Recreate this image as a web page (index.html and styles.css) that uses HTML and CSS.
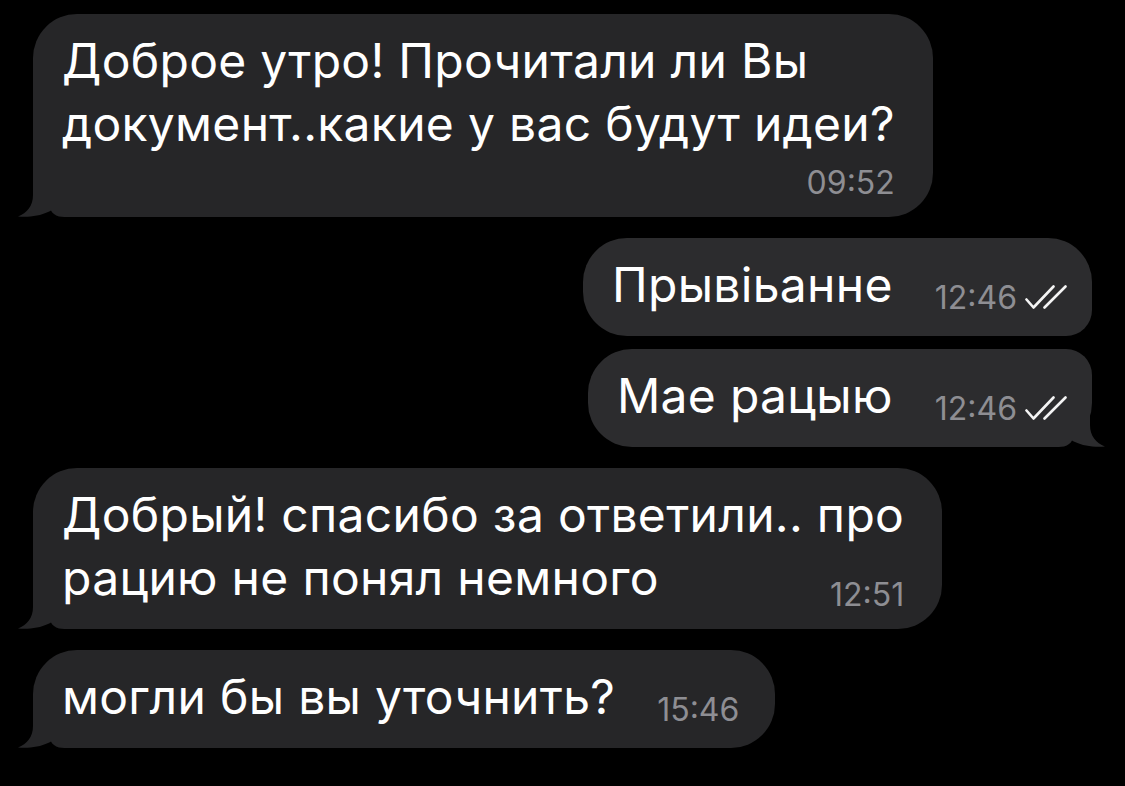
FILE: index.html
```html
<!DOCTYPE html>
<html lang="ru">
<head>
<meta charset="utf-8">
<title>Chat</title>
<link rel="stylesheet" href="styles.css">
</head>
<body>
<div class="chat">
  <div class="bubble in stack">
    <svg class="tail" viewBox="0 0 62 46"><path d="M15,0 L15,24 C15,35 9,42 0,45.5 C10,46.5 22,45 30,41 Q32,40 33,39.5 Q35,43.5 41,45.5 Q46,46 52,46 L62,46 L62,0 Z"/></svg>
    <p class="text">Доброе утро! Прочитали ли Вы<br>документ..какие у вас будут идеи?</p>
    <div class="meta below">09:52</div>
  </div>
  <div class="out-group">
    <div class="bubble out row merged-bottom">
      <p class="text">Прывіьанне</p>
      <div class="meta">12:46<svg class="check" viewBox="0 0 42 24"><path d="M1.5,14.5 L8.5,22.5 L28.5,1.5 M19.5,22.5 L40.5,1.5"/></svg></div>
    </div>
    <div class="bubble out row merged-top">
      <svg class="tail" viewBox="0 0 62 46"><path d="M15,0 L15,24 C15,35 9,42 0,45.5 C10,46.5 22,45 30,41 Q32,40 33,39.5 Q35,43.5 41,45.5 Q46,46 52,46 L62,46 L62,0 Z"/></svg>
      <p class="text">Мае рацыю</p>
      <div class="meta">12:46<svg class="check" viewBox="0 0 42 24"><path d="M1.5,14.5 L8.5,22.5 L28.5,1.5 M19.5,22.5 L40.5,1.5"/></svg></div>
    </div>
  </div>
  <div class="bubble in stack">
    <svg class="tail" viewBox="0 0 62 46"><path d="M15,0 L15,24 C15,35 9,42 0,45.5 C10,46.5 22,45 30,41 Q32,40 33,39.5 Q35,43.5 41,45.5 Q46,46 52,46 L62,46 L62,0 Z"/></svg>
    <p class="text">Добрый! спасибо за ответили.. про<br>рацию не понял немного</p>
    <div class="meta over">12:51</div>
  </div>
  <div class="bubble in row">
    <svg class="tail" viewBox="0 0 62 46"><path d="M15,0 L15,24 C15,35 9,42 0,45.5 C10,46.5 22,45 30,41 Q32,40 33,39.5 Q35,43.5 41,45.5 Q46,46 52,46 L62,46 L62,0 Z"/></svg>
    <p class="text">могли бы вы уточнить?</p>
    <div class="meta">15:46</div>
  </div>
</div>
</body>
</html>
```

FILE: styles.css
```css
* {
  box-sizing: border-box;
  margin: 0;
}

html, body {
  background: #000;
}

body {
  margin: 0;
  width: 1125px;
  height: 786px;
  overflow: hidden;
  font-family: Inter, "Noto Sans", sans-serif;
  color: #fff;
}

.chat {
  display: flex;
  flex-direction: column;
  gap: 21px;
  padding: 14px 33px 0;
}

.out-group {
  display: flex;
  flex-direction: column;
  align-items: flex-end;
  gap: 13px;
}

.bubble {
  position: relative;
  border-radius: 44px;
  padding: 15px 38px 16px 29px;
}

.in {
  align-self: flex-start;
  background: #262628;
}

.out {
  background: #2c2c2e;
}

.text {
  position: relative;
  z-index: 1;
  font-size: 48px;
  line-height: 63px;
  letter-spacing: 0.3px;
  white-space: nowrap;
}

.meta {
  position: relative;
  z-index: 1;
  font-size: 32px;
  line-height: 36px;
  color: #8e8e93;
  text-align: right;
  white-space: nowrap;
}

.meta.below {
  margin-top: 10px;
}

.meta.over {
  margin-top: -32px;
}

.row {
  display: flex;
  align-items: flex-end;
  gap: 42px;
  padding-bottom: 20px;
}

.in.row {
  padding-right: 36px;
}

.out.row {
  padding-right: 25px;
}

.merged-bottom {
  border-bottom-right-radius: 26px;
}

.merged-top {
  border-top-right-radius: 26px;
}

.tail {
  position: absolute;
  bottom: 0;
  width: 62px;
  height: 46px;
}

.in .tail {
  left: -15px;
  fill: #262628;
}

.out .tail {
  right: -13px;
  transform: scaleX(-1);
  fill: #2c2c2e;
}

.check {
  width: 42px;
  height: 24px;
  margin-left: 8px;
  vertical-align: baseline;
  fill: none;
  stroke: #f4f4f4;
  stroke-width: 2.6;
  stroke-linecap: round;
  stroke-linejoin: round;
}
```
